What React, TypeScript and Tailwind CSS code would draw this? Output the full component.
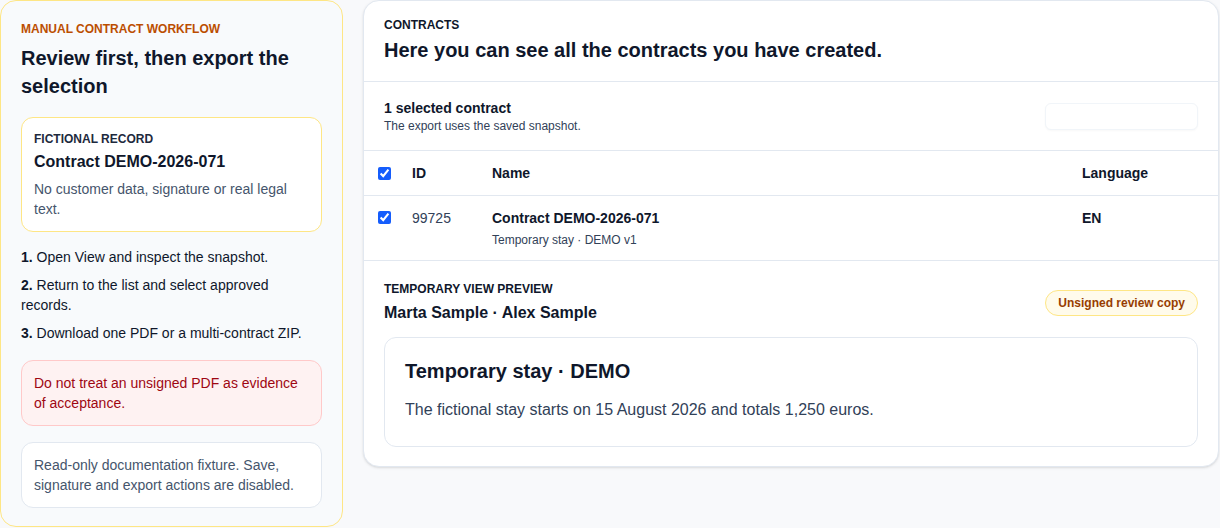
import React from 'react';

const steps = [
    { n: '1.', text: 'Open View and inspect the snapshot.' },
    { n: '2.', text: 'Return to the list and select approved records.' },
    { n: '3.', text: 'Download one PDF or a multi-contract ZIP.' },
];

const WorkflowPanel: React.FC = () => {
    return (
        <aside className="w-[343px] shrink-0 h-[527px] rounded-2xl border border-amber-200 bg-slate-50 px-[20px] pt-[20px]">
            <div className="text-xs font-bold uppercase text-amber-700 leading-4">Manual contract workflow</div>
            <h2 className="mt-[7px] text-xl font-bold leading-7 text-slate-900">
                Review first, then export the selection
            </h2>
            <div className="mt-[17px] rounded-xl border border-amber-200 bg-white px-[12px] pt-[13px] pb-[12px]">
                <div className="text-xs font-semibold uppercase text-slate-800 leading-4">Fictional record</div>
                <div className="mt-[3px] text-base font-bold text-slate-900 leading-6">Contract DEMO-2026-071</div>
                <p className="mt-[5px] text-sm leading-5 text-slate-600">
                    No customer data, signature or real legal text.
                </p>
            </div>
            <ol className="mt-[15px] flex flex-col gap-[8px] text-sm leading-5 text-slate-900">
                {steps.map((s) => (
                    <li key={s.n}>
                        <span className="font-bold">{s.n}</span> {s.text}
                    </li>
                ))}
            </ol>
            <div className="mt-[17px] rounded-xl border border-red-200 bg-red-50 px-[12px] py-[12px] text-sm leading-5 text-red-800">
                Do not treat an unsigned PDF as evidence of acceptance.
            </div>
            <div className="mt-[16px] rounded-xl border border-slate-200 bg-white px-[12px] py-[12px] text-sm leading-5 text-slate-600">
                Read-only documentation fixture. Save, signature and export actions are disabled.
            </div>
        </aside>
    );
};

const ContractsCard: React.FC = () => {
    return (
        <section className="flex-1 h-[467px] rounded-2xl border border-slate-200 bg-white shadow-sm overflow-hidden">
            <header className="px-[20px] pt-[16px] pb-[17px] border-b border-slate-200">
                <div className="text-xs font-bold uppercase text-slate-900 leading-4">Contracts</div>
                <h1 className="mt-[3px] text-xl font-bold text-slate-900 leading-7">
                    Here you can see all the contracts you have created.
                </h1>
            </header>

            <div className="flex items-center justify-between px-[20px] h-[69px] border-b border-slate-200">
                <div>
                    <div className="text-sm font-bold text-slate-900 leading-5">1 selected contract</div>
                    <div className="text-xs text-slate-700 leading-4">The export uses the saved snapshot.</div>
                </div>
                <div className="w-[153px] h-[27px] rounded-md border border-slate-100 bg-white shadow-[0_1px_2px_rgba(15,23,42,0.03)]"></div>
            </div>

            <div className="grid grid-cols-[28px_80px_1fr_116px] items-center px-[20px] h-[45px] border-b border-slate-200 text-sm font-semibold text-slate-900">
                <input type="checkbox" checked readOnly className="-ml-[6px] w-[13px] h-[13px] accent-blue-600" />
                <div>ID</div>
                <div>Name</div>
                <div>Language</div>
            </div>

            <div className="grid grid-cols-[28px_80px_1fr_116px] items-start px-[20px] pt-[12px] h-[65px] border-b border-slate-200 text-sm text-slate-900">
                <input type="checkbox" checked readOnly className="-ml-[6px] mt-[3px] w-[13px] h-[13px] accent-blue-600" />
                <div className="leading-5 text-slate-700">99725</div>
                <div>
                    <div className="font-bold leading-5">Contract DEMO-2026-071</div>
                    <div className="mt-[4px] text-xs leading-4 text-slate-700">Temporary stay · DEMO v1</div>
                </div>
                <div className="font-bold leading-5">EN</div>
            </div>

            <div className="px-[20px] pt-[20px]">
                <div className="flex items-start justify-between">
                    <div>
                        <div className="text-xs font-bold uppercase text-slate-900 leading-4">Temporary view preview</div>
                        <div className="mt-[4px] text-base font-semibold text-slate-900 leading-6">
                            Marta Sample · Alex Sample
                        </div>
                    </div>
                    <span className="mt-[9px] rounded-full border border-amber-200 bg-amber-50 px-[12px] py-[4px] text-xs font-semibold leading-4 text-amber-800">
                        Unsigned review copy
                    </span>
                </div>
                <div className="mt-[12px] h-[110px] rounded-xl border border-slate-200 bg-white px-[20px] pt-[19px]">
                    <div className="text-xl font-bold leading-7 text-slate-900">Temporary stay · DEMO</div>
                    <p className="mt-[13px] text-base leading-6 text-slate-700">
                        The fictional stay starts on 15 August 2026 and totals 1,250 euros.
                    </p>
                </div>
            </div>
        </section>
    );
};

const App: React.FC = () => {
    return (
        <div className="min-h-screen w-full bg-[#f8f9fb] font-['Liberation_Sans',Arial,sans-serif]">
            <div className="flex items-start gap-[20px] pr-[1px]">
                <WorkflowPanel />
                <ContractsCard />
            </div>
        </div>
    );
};

export default App;
